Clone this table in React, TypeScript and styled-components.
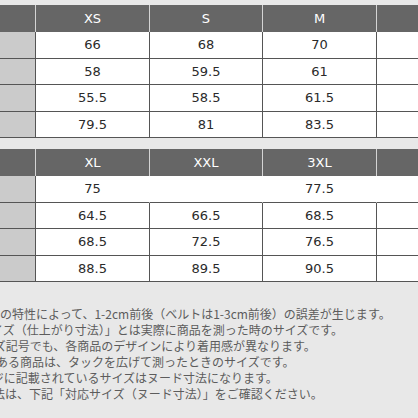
import React from 'react';
import styled, { createGlobalStyle } from 'styled-components';

const Global = createGlobalStyle`
  html, body { margin: 0; padding: 0; background: #e8e8e8; }
  body { width: 418px; height: 418px; overflow: hidden; }
`;

const Page = styled.div`
  width: 418px;
  height: 418px;
  overflow: hidden;
  background: #e8e8e8;
  padding-top: 5px;
  box-sizing: border-box;
  display: flex;
  flex-direction: column;
`;

const Table = styled.div<{ $gap?: number }>`
  display: flex;
  flex-direction: column;
  width: 460px;
  margin-top: ${(p) => p.$gap ?? 0}px;
  font-family: "DejaVu Sans", Verdana, sans-serif;
  font-size: 13px;
  flex-shrink: 0;
`;

const Row = styled.div<{ $h: number }>`
  display: grid;
  grid-template-columns: 36px 114px 113px 114px 83px;
  height: ${(p) => p.$h}px;
`;

const HeadCell = styled.div`
  background: #666666;
  color: #ffffff;
  border-right: 1px solid #d4d4d4;
  display: flex;
  align-items: center;
  justify-content: center;
  box-sizing: border-box;
`;

const Cell = styled.div<{ $label?: boolean; $open?: boolean }>`
  background: ${(p) => (p.$label ? '#cbcbcb' : '#ffffff')};
  color: #2a2a2a;
  border-right: 1px solid ${(p) => (p.$open ? '#ffffff' : '#555555')};
  border-bottom: 1px solid #555555;
  display: flex;
  align-items: center;
  justify-content: center;
  box-sizing: border-box;
`;

const Notes = styled.div`
  margin-top: 24px;
  width: 418px;
  overflow: hidden;
  font-family: "Noto Sans CJK JP", "Noto Sans", sans-serif;
  font-size: 12px;
  line-height: 16px;
  color: #5c5c5c;
`;

const NoteLine = styled.div<{ $shift: number }>`
  white-space: nowrap;
  margin-left: ${(p) => p.$shift}px;
`;

type TableData = { head: string[]; rows: string[][]; openFirst?: boolean };

const t1: TableData = {
  head: ['XS', 'S', 'M', ''],
  rows: [
    ['66', '68', '70', ''],
    ['58', '59.5', '61', ''],
    ['55.5', '58.5', '61.5', ''],
    ['79.5', '81', '83.5', ''],
  ],
};

const t2: TableData = {
  head: ['XL', 'XXL', '3XL', ''],
  rows: [
    ['75', '', '77.5', ''],
    ['64.5', '66.5', '68.5', ''],
    ['68.5', '72.5', '76.5', ''],
    ['88.5', '89.5', '90.5', ''],
  ],
  openFirst: true,
};

const notes: [string, number][] = [
  ['※素材の特性によって、1-2cm前後（ベルトは1-3cm前後）の誤差が生じます。', -36],
  ['※「サイズ（仕上がり寸法）」とは実際に商品を測った時のサイズです。', -45],
  ['※同じサイズ記号でも、各商品のデザインにより着用感が異なります。', -66],
  ['※タックのある商品は、タックを広げて測ったときのサイズです。', -64],
  ['※商品ページに記載されているサイズはヌード寸法になります。', -68],
  ['※参考寸法は、下記「対応サイズ（ヌード寸法）」をご確認ください。', -55],
];

const SizeTable: React.FC<{ data: TableData; gap?: number }> = ({ data, gap }) => (
  <Table $gap={gap}>
    <Row $h={27}>
      <HeadCell />
      {data.head.map((h, i) => (
        <HeadCell key={i}>{h}</HeadCell>
      ))}
    </Row>
    {data.rows.map((r, ri) => {
      const open = data.openFirst && ri === 0;
      return (
        <Row $h={26.5} key={ri}>
          <Cell $label />
          {r.map((v, ci) => (
            <Cell key={ci} $open={open && ci < 3}>
              {v}
            </Cell>
          ))}
        </Row>
      );
    })}
  </Table>
);

export default function App() {
  return (
    <>
      <Global />
      <Page>
        <SizeTable data={t1} />
        <SizeTable data={t2} gap={11} />
        <Notes>
          {notes.map(([t, s], i) => (
            <NoteLine key={i} $shift={s}>
              {t}
            </NoteLine>
          ))}
        </Notes>
      </Page>
    </>
  );
}
